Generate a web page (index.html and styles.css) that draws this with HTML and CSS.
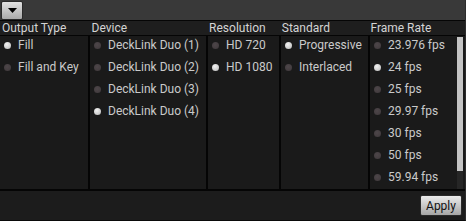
FILE: index.html
```html
<!DOCTYPE html>
<html lang="en">
<head>
    <meta charset="UTF-8">
    <meta name="viewport" content="width=device-width, initial-scale=1.0">
    <title>Output Settings</title>
    <link rel="stylesheet" href="styles.css">
</head>
<body>

<div class="panel">
    <!-- Toolbar -->
    <div class="toolbar">
        <button class="combo-button">
            <svg width="9" height="5" viewBox="0 0 9 5"><path d="M0 0 H9 L4.5 5 Z" fill="#000"/></svg>
        </button>
    </div>

    <!-- Header Row -->
    <div class="header-row">
        <div class="header col-output">Output Type</div>
        <div class="header col-device">Device</div>
        <div class="header col-res">Resolution</div>
        <div class="header col-std">Standard</div>
        <div class="header col-rate">Frame Rate</div>
    </div>

    <!-- Option Columns -->
    <div class="columns">
        <div class="column col-output">
            <div class="item"><span class="dot on"></span>Fill</div>
            <div class="item"><span class="dot"></span>Fill and Key</div>
        </div>
        <div class="column col-device">
            <div class="item"><span class="dot"></span>DeckLink Duo (1)</div>
            <div class="item"><span class="dot"></span>DeckLink Duo (2)</div>
            <div class="item"><span class="dot"></span>DeckLink Duo (3)</div>
            <div class="item"><span class="dot on"></span>DeckLink Duo (4)</div>
        </div>
        <div class="column col-res">
            <div class="item"><span class="dot"></span>HD 720</div>
            <div class="item"><span class="dot on"></span>HD 1080</div>
        </div>
        <div class="column col-std">
            <div class="item"><span class="dot on"></span>Progressive</div>
            <div class="item"><span class="dot"></span>Interlaced</div>
        </div>
        <div class="column col-rate">
            <div class="list">
                <div class="item"><span class="dot"></span>23.976 fps</div>
                <div class="item"><span class="dot on"></span>24 fps</div>
                <div class="item"><span class="dot"></span>25 fps</div>
                <div class="item"><span class="dot"></span>29.97 fps</div>
                <div class="item"><span class="dot"></span>30 fps</div>
                <div class="item"><span class="dot"></span>50 fps</div>
                <div class="item"><span class="dot"></span>59.94 fps</div>
            </div>
            <div class="scrollbar"><div class="thumb"></div></div>
        </div>
    </div>

    <!-- Bottom Bar -->
    <div class="footer">
        <button class="apply-button">Apply</button>
    </div>
</div>

</body>
</html>
```

FILE: styles.css
```css
body {
    margin: 0;
    padding: 0;
    background-color: #1a1a1a;
    font-family: Roboto, "Liberation Sans", sans-serif;
    font-size: 12px;
}

.panel {
    width: 466px;
    height: 221px;
    display: flex;
    flex-direction: column;
    box-sizing: border-box;
    border-right: 1px solid #2c2c2c;
    border-bottom: 1px solid #0a0a0a;
}

/* Toolbar with the drop-down button */
.toolbar {
    height: 21px;
    box-sizing: border-box;
    padding: 1px 0 0 1px;
    background-color: #393939;
    border-bottom: 1px solid #050505;
}

.combo-button {
    width: 22px;
    height: 19px;
    padding: 0;
    display: flex;
    align-items: center;
    justify-content: center;
    border: 1px solid #2a2a2a;
    border-radius: 2px;
    background: linear-gradient(#e2e2e2, #a9a9a9);
}

/* Column widths */
.col-output { width: 88px; }
.col-device { width: 116px; }
.col-res { width: 71px; }
.col-std { width: 87px; }
.col-rate { width: 95px; }

.header-row {
    height: 15px;
    display: flex;
    box-sizing: border-box;
    background-color: #1e1e1e;
    border-bottom: 1px solid #050505;
}

.header {
    padding-left: 2px;
    margin-right: 2px;
    box-sizing: border-box;
    color: #d4d4d4;
    line-height: 14px;
}

.columns {
    height: 153px;
    display: flex;
    border-bottom: 2px solid #050505;
}

.column {
    background-color: #1a1a1a;
    border-right: 2px solid #050505;
}

.column.col-rate {
    display: flex;
    border-right: none;
}

.column.col-rate .list {
    flex: 1;
}

.item {
    height: 22px;
    padding: 0 0 4px 4px;
    box-sizing: border-box;
    display: flex;
    align-items: center;
    color: #cacaca;
    white-space: nowrap;
}

.dot {
    width: 7px;
    height: 7px;
    border-radius: 50%;
    margin-right: 7px;
    background: radial-gradient(circle at 45% 40%, #4d4649, #3e383b);
}

.dot.on {
    background: radial-gradient(circle at 40% 35%, #f2f2f2, #b8b8b8);
}

.scrollbar {
    width: 6px;
    margin: 1px 2px 0 0;
    background-color: #262626;
}

.thumb {
    height: 134px;
    background-color: #c4c4c4;
}

.footer {
    flex: 1;
    display: flex;
    justify-content: flex-end;
    align-items: flex-start;
    padding: 4px 3px 0 0;
    background-color: #1c1c1c;
}

.apply-button {
    width: 42px;
    height: 21px;
    padding: 0;
    font-family: Roboto, "Liberation Sans", sans-serif;
    font-size: 12px;
    color: #111;
    border: 1px solid #2a2a2a;
    border-radius: 2px;
    background: linear-gradient(#ececec, #a6a6a6);
}
```
